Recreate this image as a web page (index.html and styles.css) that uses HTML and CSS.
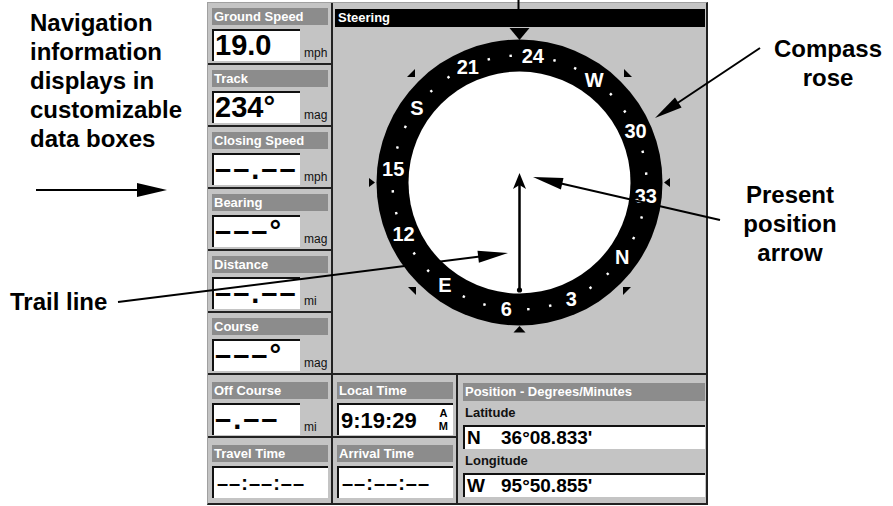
FILE: index.html
```html
<!DOCTYPE html>
<html lang="en">
<head>
    <meta charset="UTF-8">
    <meta name="viewport" content="width=device-width, initial-scale=1.0">
    <title>Steering Page</title>
    <link rel="stylesheet" href="styles.css">
</head>
<body>
    <div class="figure">
        <!-- Keterangan kiri -->
        <div class="notes-left">
            <p class="note nav-note">Navigation<br>information<br>displays in<br>customizable<br>data boxes</p>
            <p class="note trail-note">Trail line</p>
        </div>

        <!-- Layar GPS -->
        <div class="gps">
            <div class="gps-top">
                <div class="fields">
                    <div class="field">
                        <div class="label">Ground Speed</div>
                        <div class="reading"><span class="value">19.0</span><span class="unit">mph</span></div>
                    </div>
                    <div class="field">
                        <div class="label">Track</div>
                        <div class="reading"><span class="value">234°</span><span class="unit">mag</span></div>
                    </div>
                    <div class="field">
                        <div class="label">Closing Speed</div>
                        <div class="reading"><span class="value dashes">––.––</span><span class="unit">mph</span></div>
                    </div>
                    <div class="field">
                        <div class="label">Bearing</div>
                        <div class="reading"><span class="value dashes">–––°</span><span class="unit">mag</span></div>
                    </div>
                    <div class="field">
                        <div class="label">Distance</div>
                        <div class="reading"><span class="value dashes">––.––</span><span class="unit">mi</span></div>
                    </div>
                    <div class="field">
                        <div class="label">Course</div>
                        <div class="reading"><span class="value dashes">–––°</span><span class="unit">mag</span></div>
                    </div>
                </div>

                <div class="steering">
                    <div class="steering-title">Steering</div>
                    <svg class="rose" viewBox="333 27 373 346" width="373" height="346">
                        <circle cx="519.5" cy="182.5" r="143" fill="#000"/>
                        <circle cx="519.5" cy="182.5" r="111" fill="#fff"/>

                        <!-- titik tiap 10 derajat -->
                        <g fill="#fff" transform="rotate(-234 519.5 182.5)">
                            <rect x="518.3" y="54.3" width="2.4" height="2.4" transform="rotate(10 519.5 182.5)"/>
                            <rect x="518.3" y="54.3" width="2.4" height="2.4" transform="rotate(20 519.5 182.5)"/>
                            <rect x="518.3" y="54.3" width="2.4" height="2.4" transform="rotate(40 519.5 182.5)"/>
                            <rect x="518.3" y="54.3" width="2.4" height="2.4" transform="rotate(50 519.5 182.5)"/>
                            <rect x="518.3" y="54.3" width="2.4" height="2.4" transform="rotate(70 519.5 182.5)"/>
                            <rect x="518.3" y="54.3" width="2.4" height="2.4" transform="rotate(80 519.5 182.5)"/>
                            <rect x="518.3" y="54.3" width="2.4" height="2.4" transform="rotate(100 519.5 182.5)"/>
                            <rect x="518.3" y="54.3" width="2.4" height="2.4" transform="rotate(110 519.5 182.5)"/>
                            <rect x="518.3" y="54.3" width="2.4" height="2.4" transform="rotate(130 519.5 182.5)"/>
                            <rect x="518.3" y="54.3" width="2.4" height="2.4" transform="rotate(140 519.5 182.5)"/>
                            <rect x="518.3" y="54.3" width="2.4" height="2.4" transform="rotate(160 519.5 182.5)"/>
                            <rect x="518.3" y="54.3" width="2.4" height="2.4" transform="rotate(170 519.5 182.5)"/>
                            <rect x="518.3" y="54.3" width="2.4" height="2.4" transform="rotate(190 519.5 182.5)"/>
                            <rect x="518.3" y="54.3" width="2.4" height="2.4" transform="rotate(200 519.5 182.5)"/>
                            <rect x="518.3" y="54.3" width="2.4" height="2.4" transform="rotate(220 519.5 182.5)"/>
                            <rect x="518.3" y="54.3" width="2.4" height="2.4" transform="rotate(230 519.5 182.5)"/>
                            <rect x="518.3" y="54.3" width="2.4" height="2.4" transform="rotate(250 519.5 182.5)"/>
                            <rect x="518.3" y="54.3" width="2.4" height="2.4" transform="rotate(260 519.5 182.5)"/>
                            <rect x="518.3" y="54.3" width="2.4" height="2.4" transform="rotate(280 519.5 182.5)"/>
                            <rect x="518.3" y="54.3" width="2.4" height="2.4" transform="rotate(290 519.5 182.5)"/>
                            <rect x="518.3" y="54.3" width="2.4" height="2.4" transform="rotate(310 519.5 182.5)"/>
                            <rect x="518.3" y="54.3" width="2.4" height="2.4" transform="rotate(320 519.5 182.5)"/>
                            <rect x="518.3" y="54.3" width="2.4" height="2.4" transform="rotate(340 519.5 182.5)"/>
                            <rect x="518.3" y="54.3" width="2.4" height="2.4" transform="rotate(350 519.5 182.5)"/>
                        </g>

                        <g class="rose-labels">
                            <text x="622.2" y="257.1">N</text>
                            <text x="571.2" y="298.5">3</text>
                            <text x="506.2" y="308.8">6</text>
                            <text x="444.9" y="285.2">E</text>
                            <text x="403.5" y="234.2">12</text>
                            <text x="393.2" y="169.2">15</text>
                            <text x="416.8" y="107.9">S</text>
                            <text x="467.8" y="66.5">21</text>
                            <text x="532.8" y="56.2">24</text>
                            <text x="594.2" y="79.8">W</text>
                            <text x="635.5" y="130.8">30</text>
                            <text x="645.8" y="195.8">33</text>
                        </g>

                        <!-- penanda di luar cincin -->
                        <g fill="#000">
                            <polygon points="509.5,28 529.5,28 519.5,40"/>
                            <polygon points="519.5,326 513.5,332.5 525.5,332.5"/>
                            <polygon points="375,182.5 369,178 369,187"/>
                            <polygon points="664,182.5 670,178 670,187"/>
                            <polygon points="415,69 415,77 407,77"/>
                            <polygon points="624,69 624,77 632,77"/>
                            <polygon points="416,287 408,287 416,295"/>
                            <polygon points="623,287 631,287 623,295"/>
                        </g>

                        <!-- posisi sekarang dan jejak -->
                        <line x1="519.5" y1="185" x2="519.5" y2="290" stroke="#000" stroke-width="2.5"/>
                        <circle cx="519.5" cy="290" r="2.6" fill="#000"/>
                        <polygon points="519.5,173 526,189 519.5,185 513,189" fill="#000"/>
                    </svg>
                </div>
            </div>

            <div class="gps-bottom">
                <div class="cell-col">
                    <div class="field">
                        <div class="label">Off Course</div>
                        <div class="reading"><span class="value dashes">–.––</span><span class="unit">mi</span></div>
                    </div>
                    <div class="field">
                        <div class="label">Travel Time</div>
                        <div class="reading"><span class="value wide timer">––:––:––</span></div>
                    </div>
                </div>
                <div class="cell-col">
                    <div class="field">
                        <div class="label">Local Time</div>
                        <div class="reading"><span class="value wide clock">9:19:29<span class="ampm">A<br>M</span></span></div>
                    </div>
                    <div class="field">
                        <div class="label">Arrival Time</div>
                        <div class="reading"><span class="value wide timer">––:––:––</span></div>
                    </div>
                </div>
                <div class="position">
                    <div class="label">Position - Degrees/Minutes</div>
                    <div class="coord-label">Latitude</div>
                    <div class="coord"><span class="hemi">N</span>36°08.833'</div>
                    <div class="coord-label">Longitude</div>
                    <div class="coord"><span class="hemi">W</span>95°50.855'</div>
                </div>
            </div>
        </div>

        <!-- Keterangan kanan -->
        <div class="notes-right">
            <p class="note rose-note">Compass<br>rose</p>
            <p class="note arrow-note">Present<br>position<br>arrow</p>
        </div>

        <!-- Garis penunjuk -->
        <svg class="callouts" viewBox="0 0 893 506" width="893" height="506">
            <g stroke="#000" stroke-width="2">
                <line x1="518.5" y1="0" x2="518.5" y2="9"/>
                <line x1="36" y1="190" x2="140" y2="190"/>
                <line x1="118" y1="302" x2="480" y2="256.5"/>
                <line x1="720" y1="220" x2="560" y2="183.2"/>
                <line x1="760" y1="48" x2="676" y2="104"/>
            </g>
            <g fill="#000">
                <polygon points="137,183 167,190 137,197"/>
                <polygon points="508,253 478.9,262.7 477.5,250.8"/>
                <polygon points="533,177 563.5,177.9 560.9,189.5"/>
                <polygon points="655,118 675,97.5 681.6,107.5"/>
            </g>
        </svg>
    </div>
</body>
</html>
```

FILE: styles.css
```css
body {
    margin: 0;
    background-color: #fff;
    font-family: "Liberation Sans", Arial, sans-serif;
    overflow: hidden;
}
.figure {
    position: relative;
    display: flex;
    width: 893px;
    height: 506px;
}

/* keterangan */
.note {
    margin: 0;
    font-size: 24px;
    font-weight: bold;
    line-height: 29px;
    color: #000;
}
.notes-left {
    width: 207px;
    flex-shrink: 0;
}
.nav-note {
    margin: 8px 0 0 30px;
}
.trail-note {
    margin: 134px 0 0 10px;
}
.notes-right {
    flex: 1;
}
.rose-note {
    width: 120px;
    margin: 34px 0 0 60px;
    text-align: center;
}
.arrow-note {
    width: 120px;
    margin: 88px 0 0 22px;
    text-align: center;
}
.callouts {
    position: absolute;
    left: 0;
    top: 0;
    pointer-events: none;
}

/* layar */
.gps {
    width: 501px;
    height: 503px;
    margin-top: 2px;
    flex-shrink: 0;
    box-sizing: border-box;
    border-top: 1px solid #a0a0a0;
    border-left: 1px solid #a0a0a0;
    border-right: 2px solid #222;
    border-bottom: 2px solid #222;
    background-color: #c4c4c4;
}
.gps-top {
    display: flex;
    height: 372px;
    box-sizing: border-box;
    border-bottom: 2px solid #222;
}
.fields {
    width: 125px;
    box-sizing: border-box;
    border-right: 2px solid #222;
}
.field {
    height: 62px;
    box-sizing: border-box;
    padding: 5px 3px 0 4px;
    border-bottom: 2px solid #222;
}
.fields .field:last-child {
    height: 60px;
    border-bottom: none;
}
.label {
    height: 17px;
    padding-left: 2px;
    background-color: #8c8c8c;
    color: #fff;
    font-size: 13px;
    font-weight: bold;
    line-height: 17px;
    white-space: nowrap;
    overflow: hidden;
}
.reading {
    display: flex;
    align-items: flex-end;
    height: 32px;
    margin-top: 4px;
}
.value {
    box-sizing: border-box;
    width: 88px;
    height: 32px;
    padding-left: 1px;
    background-color: #fff;
    border-top: 2px solid #111;
    border-left: 2px solid #111;
    color: #000;
    font-size: 29px;
    font-weight: bold;
    line-height: 29px;
    white-space: nowrap;
}
.dashes {
    letter-spacing: 2px;
}
.value.wide {
    flex: 1;
    display: flex;
    align-items: center;
}
.timer {
    font-size: 20px;
    letter-spacing: 1px;
    padding-left: 3px;
}
.clock {
    font-size: 22px;
    padding-left: 2px;
}
.ampm {
    margin-left: auto;
    padding-right: 5px;
    font-size: 11px;
    line-height: 13px;
    text-align: center;
}
.unit {
    padding-left: 4px;
    margin-bottom: 2px;
    color: #111;
    font-size: 12px;
    line-height: 12px;
}

/* kemudi */
.steering {
    flex: 1;
    display: flex;
    flex-direction: column;
}
.steering-title {
    height: 18px;
    margin: 6px 1px 0 2px;
    padding-left: 3px;
    background-color: #000;
    color: #fff;
    font-size: 13px;
    font-weight: bold;
    line-height: 18px;
}
.rose {
    display: block;
}
.rose-labels text {
    fill: #fff;
    font-family: "Liberation Sans", Arial, sans-serif;
    font-size: 20px;
    font-weight: bold;
    text-anchor: middle;
    dominant-baseline: central;
}

/* baris bawah */
.gps-bottom {
    display: flex;
    height: 128px;
}
.cell-col {
    width: 125px;
    box-sizing: border-box;
    border-right: 2px solid #222;
}
.gps-bottom .field {
    height: 63px;
    padding-top: 7px;
}
.gps-bottom .field:last-child {
    height: 65px;
    border-bottom: none;
}
.position {
    flex: 1;
    box-sizing: border-box;
    padding: 8px 1px 0 5px;
}
.position .label {
    height: 18px;
    line-height: 18px;
}
.coord-label {
    height: 24px;
    padding-left: 2px;
    color: #111;
    font-size: 13px;
    font-weight: bold;
    line-height: 24px;
}
.coord {
    display: flex;
    box-sizing: border-box;
    height: 24px;
    padding-left: 2px;
    background-color: #fff;
    border-top: 2px solid #111;
    border-left: 2px solid #111;
    color: #000;
    font-size: 19px;
    font-weight: bold;
    line-height: 22px;
}
.hemi {
    width: 34px;
}
```
